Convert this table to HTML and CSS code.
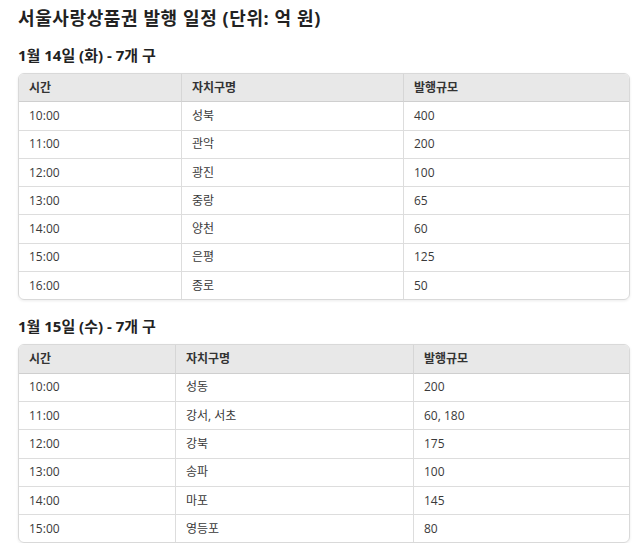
FILE: index.html
```html
<!DOCTYPE html>
<html lang="ko">
<head>
<meta charset="utf-8">
<title>서울사랑상품권 발행 일정</title>
<link rel="stylesheet" href="styles.css">
</head>
<body>
<div class="page">
  <h2 class="title">서울사랑상품권 발행 일정 (단위: 억 원)</h2>

  <h3 class="day">1월 14일 (화) - 7개 구</h3>
  <table class="sched sched-a">
    <colgroup><col class="c1"><col class="c2"><col class="c3"></colgroup>
    <thead><tr><th>시간</th><th>자치구명</th><th>발행규모</th></tr></thead>
    <tbody>
      <tr><td>10:00</td><td>성북</td><td>400</td></tr>
      <tr><td>11:00</td><td>관악</td><td>200</td></tr>
      <tr><td>12:00</td><td>광진</td><td>100</td></tr>
      <tr><td>13:00</td><td>중랑</td><td>65</td></tr>
      <tr><td>14:00</td><td>양천</td><td>60</td></tr>
      <tr><td>15:00</td><td>은평</td><td>125</td></tr>
      <tr><td>16:00</td><td>종로</td><td>50</td></tr>
    </tbody>
  </table>

  <h3 class="day">1월 15일 (수) - 7개 구</h3>
  <table class="sched sched-b">
    <colgroup><col class="c1"><col class="c2"><col class="c3"></colgroup>
    <thead><tr><th>시간</th><th>자치구명</th><th>발행규모</th></tr></thead>
    <tbody>
      <tr><td>10:00</td><td>성동</td><td>200</td></tr>
      <tr><td>11:00</td><td>강서, 서초</td><td>60, 180</td></tr>
      <tr><td>12:00</td><td>강북</td><td>175</td></tr>
      <tr><td>13:00</td><td>송파</td><td>100</td></tr>
      <tr><td>14:00</td><td>마포</td><td>145</td></tr>
      <tr><td>15:00</td><td>영등포</td><td>80</td></tr>
    </tbody>
  </table>
</div>
</body>
</html>
```

FILE: styles.css
```css
html, body {
  margin: 0;
  padding: 0;
  background: #ffffff;
}

body {
  font-family: "Open Sans", "Noto Sans CJK KR", sans-serif;
  color: #333333;
}

.page {
  padding: 6px 10px 0 18px;
}

.title {
  margin: 0;
  font-size: 18px;
  letter-spacing: 0.6px;
  line-height: 24px;
  font-weight: 700;
  color: #222222;
}

.day {
  margin: 15px 0 8px;
  font-size: 15px;
  line-height: 20px;
  font-weight: 700;
  color: #222222;
}

.sched + .day {
  margin-top: 16px;
}

.sched {
  width: 612px;
  table-layout: fixed;
  border-collapse: separate;
  border-spacing: 0;
  border: 1px solid #d9d9d9;
  border-radius: 6px;
  overflow: hidden;
  box-shadow: 0 1px 3px rgba(0, 0, 0, 0.08);
  font-size: 12px;
}

.sched-a .c1 { width: 163px; }
.sched-a .c2 { width: 222px; }
.sched-a .c3 { width: auto; }

.sched-b .c1 { width: 157px; }
.sched-b .c2 { width: 238px; }
.sched-b .c3 { width: auto; }

.sched th,
.sched td {
  text-align: left;
  padding: 0 10px;
  height: 27.3px;
  line-height: 16px;
  border-bottom: 1px solid #dddddd;
  border-right: 1px solid #dddddd;
  vertical-align: middle;
}

.sched th:last-child,
.sched td:last-child {
  border-right: none;
}

.sched tbody tr:last-child td {
  border-bottom: none;
}

.sched th {
  background: #e8e8e8;
  font-weight: 700;
  color: #333333;
  border-bottom-color: #cfcfcf;
  border-right-color: #d6d6d6;
}

.sched td {
  color: #3a3a3a;
}
```
